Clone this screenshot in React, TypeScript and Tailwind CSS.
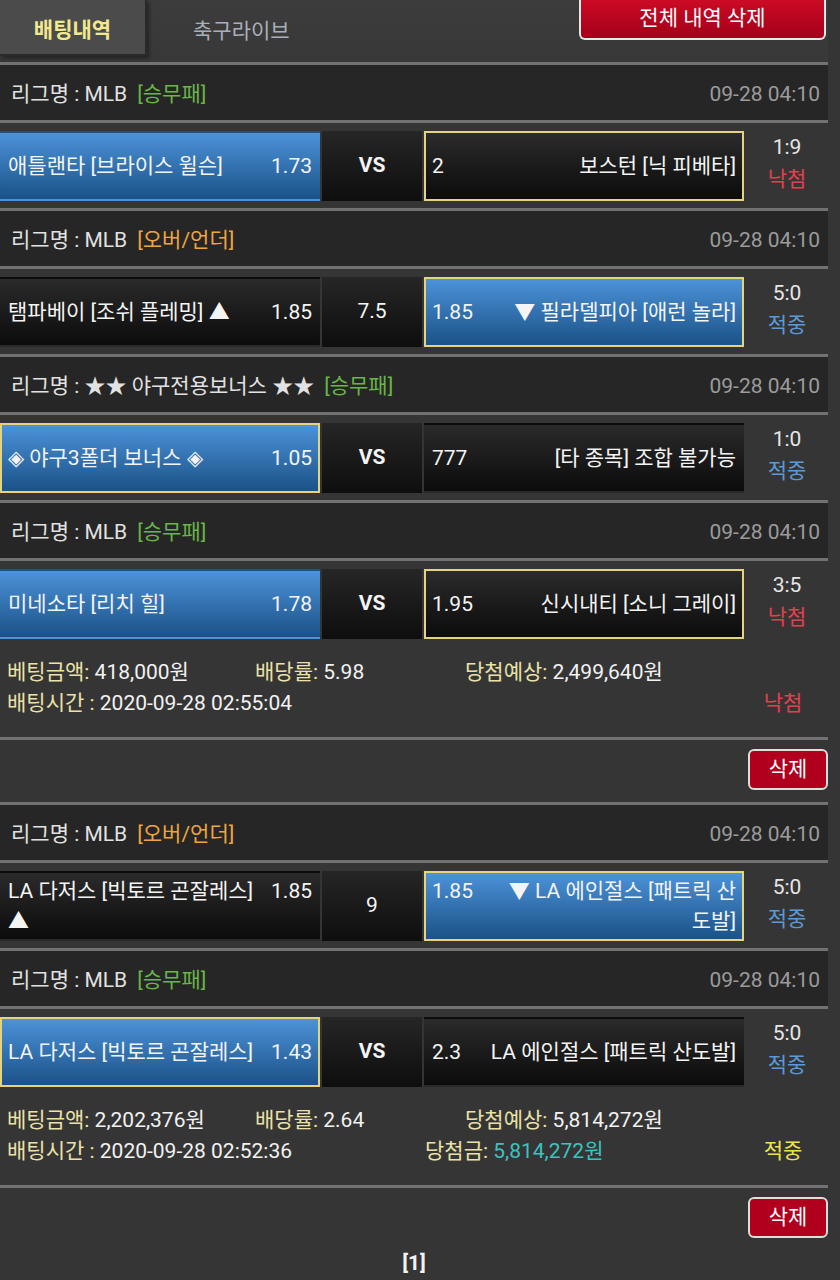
import React from 'react';

type Side = { name: React.ReactNode; odds: string; win?: boolean; pick?: boolean };

type Bet = {
  league: string;
  kind: '승무패' | '오버/언더';
  date: string;
  home: Side;
  mid: string;
  away: Side;
  score: string;
  result: '낙첨' | '적중';
};

type Slip = {
  bets: Bet[];
  amount: string;
  rate: string;
  expect: string;
  time: string;
  prize?: string;
  result: '낙첨' | '적중';
};

const slips: Slip[] = [
  {
    bets: [
      {
        league: 'MLB',
        kind: '승무패',
        date: '09-28 04:10',
        home: { name: '애틀랜타 [브라이스 윌슨]', odds: '1.73', win: true },
        mid: 'VS',
        away: { name: '보스턴 [닉 피베타]', odds: '2', pick: true },
        score: '1:9',
        result: '낙첨',
      },
      {
        league: 'MLB',
        kind: '오버/언더',
        date: '09-28 04:10',
        home: { name: '탬파베이 [조쉬 플레밍] ▲', odds: '1.85' },
        mid: '7.5',
        away: { name: '▼ 필라델피아 [애런 놀라]', odds: '1.85', win: true, pick: true },
        score: '5:0',
        result: '적중',
      },
      {
        league: '★★ 야구전용보너스 ★★',
        kind: '승무패',
        date: '09-28 04:10',
        home: { name: '◈ 야구3폴더 보너스 ◈', odds: '1.05', win: true, pick: true },
        mid: 'VS',
        away: { name: '[타 종목] 조합 불가능', odds: '777' },
        score: '1:0',
        result: '적중',
      },
      {
        league: 'MLB',
        kind: '승무패',
        date: '09-28 04:10',
        home: { name: '미네소타 [리치 힐]', odds: '1.78', win: true },
        mid: 'VS',
        away: { name: '신시내티 [소니 그레이]', odds: '1.95', pick: true },
        score: '3:5',
        result: '낙첨',
      },
    ],
    amount: '418,000원',
    rate: '5.98',
    expect: '2,499,640원',
    time: '2020-09-28 02:55:04',
    result: '낙첨',
  },
  {
    bets: [
      {
        league: 'MLB',
        kind: '오버/언더',
        date: '09-28 04:10',
        home: { name: 'LA 다저스 [빅토르 곤잘레스] ▲', odds: '1.85' },
        mid: '9',
        away: {
          name: (
            <>
              ▼ LA 에인절스 [패트릭 산<span className="whitespace-nowrap">도발]</span>
            </>
          ),
          odds: '1.85',
          win: true,
          pick: true,
        },
        score: '5:0',
        result: '적중',
      },
      {
        league: 'MLB',
        kind: '승무패',
        date: '09-28 04:10',
        home: { name: 'LA 다저스 [빅토르 곤잘레스]', odds: '1.43', win: true, pick: true },
        mid: 'VS',
        away: { name: 'LA 에인절스 [패트릭 산도발]', odds: '2.3' },
        score: '5:0',
        result: '적중',
      },
    ],
    amount: '2,202,376원',
    rate: '2.64',
    expect: '5,814,272원',
    time: '2020-09-28 02:52:36',
    prize: '5,814,272원',
    result: '적중',
  },
];

const Sep = () => <div className="h-[3px] bg-[#727272]" />;

const cellTone = (s: Side) =>
  [
    'flex h-[70px] w-[320px] items-center border-2 px-[6px] leading-[30px] text-[#f4f4f4]',
    s.win ? 'bg-gradient-to-b from-[#4c93d9] to-[#1b5288]' : 'bg-gradient-to-b from-[#2b2b2b] to-[#0c0c0c]',
    s.pick ? 'border-[#e4d47c]' : 'border-transparent',
  ].join(' ');

const LeagueBar = ({ bet }: { bet: Bet }) => (
  <div className="flex h-[55px] items-center justify-between bg-[#262626] pl-[11px] pr-[8px] pt-[4px]">
    <div className="text-[#e2e2e2]">
      리그명 : {bet.league}
      <span className={bet.kind === '승무패' ? 'ml-[10px] text-[#68b548]' : 'ml-[10px] text-[#eea53e]'}>
        [{bet.kind}]
      </span>
    </div>
    <div className="text-[#9b9b9b]">{bet.date}</div>
  </div>
);

const MatchRow = ({ bet }: { bet: Bet }) => (
  <div className="flex gap-[2px] pb-[7px] pt-[8px]">
    <div className={cellTone(bet.home)}>
      <div className="flow-root w-full">
        <span className="float-right ml-[8px]">{bet.home.odds}</span>
        {bet.home.name}
      </div>
    </div>
    <div
      className={`flex h-[70px] w-[100px] items-center justify-center bg-gradient-to-b from-[#262626] to-[#0e0e0e] text-[#f4f4f4] ${
        bet.mid === 'VS' ? 'font-bold' : ''
      }`}
    >
      {bet.mid}
    </div>
    <div className={cellTone(bet.away)}>
      <div className="flow-root w-full text-right">
        <span className="float-left mr-[8px]">{bet.away.odds}</span>
        {bet.away.name}
      </div>
    </div>
    <div className="flex flex-1 flex-col items-center justify-center pb-[6px] leading-[32px]">
      <span className="text-[#e6e6e6]">{bet.score}</span>
      <span className={bet.result === '낙첨' ? 'text-[#e2404f]' : 'text-[#5b9ad8]'}>{bet.result}</span>
    </div>
  </div>
);

const SlipInfo = ({ slip }: { slip: Slip }) => (
  <div className="pb-[18px] pl-[7px] pt-[11px] leading-[31px]">
    <div className="flex">
      <span className="w-[248px]">
        <span className="text-[#ebe2a6]">베팅금액:</span> <span className="text-[#f2f2f2]">{slip.amount}</span>
      </span>
      <span className="w-[210px]">
        <span className="text-[#ebe2a6]">배당률:</span> <span className="text-[#f2f2f2]">{slip.rate}</span>
      </span>
      <span>
        <span className="text-[#ebe2a6]">당첨예상:</span> <span className="text-[#f2f2f2]">{slip.expect}</span>
      </span>
    </div>
    <div className="flex">
      <span className="w-[418px]">
        <span className="text-[#ebe2a6]">배팅시간 :</span> <span className="text-[#f2f2f2]">{slip.time}</span>
      </span>
      <span className="flex-1">
        {slip.prize && (
          <>
            <span className="text-[#ebe2a6]">당첨금:</span> <span className="text-[#3cc3c0]">{slip.prize}</span>
          </>
        )}
      </span>
      <span className={`w-[90px] text-center ${slip.result === '낙첨' ? 'text-[#e2404f]' : 'text-[#ece350]'}`}>
        {slip.result}
      </span>
    </div>
  </div>
);

export default function App() {
  return (
    <div className="min-h-[1280px] w-[840px] bg-[#353535] font-[Roboto,'Noto_Sans_CJK_KR',sans-serif] text-[21px]">
      <div className="w-[828px]">
        <div className="flex h-[62px] items-start bg-gradient-to-b from-[#3c3c3c] to-[#383838]">
          <div className="flex h-[56px] w-[147px] items-center justify-center border-b-2 border-r-2 border-[#2a2a2a] bg-[#4b4b4b] pt-[8px] font-bold text-[#f2e98e] shadow-[2px_2px_4px_rgba(0,0,0,0.4)]">
            배팅내역
          </div>
          <div className="ml-[46px] mt-[16px] text-[#a8afb9]">축구라이브</div>
          <button className="ml-auto mr-[2px] h-[40px] w-[247px] rounded-b-[6px] border-2 border-t-0 border-[#e8e8e8] bg-gradient-to-b from-[#cc0b24] to-[#a3001a] text-white">
            전체 내역 삭제
          </button>
        </div>

        {slips.map((slip, i) => (
          <div key={i}>
            {slip.bets.map((bet, j) => (
              <div key={j}>
                <Sep />
                <LeagueBar bet={bet} />
                <Sep />
                <MatchRow bet={bet} />
              </div>
            ))}
            <SlipInfo slip={slip} />
            <Sep />
            <div className="flex justify-end pb-[12px] pt-[9px]">
              <button className="h-[41px] w-[80px] rounded-[6px] border-2 border-[#e2dcdc] bg-[#b0001d] text-white">
                삭제
              </button>
            </div>
          </div>
        ))}

        <div className="text-center font-bold leading-[26px] text-[#f2f2f2]">[1]</div>
      </div>
    </div>
  );
}
